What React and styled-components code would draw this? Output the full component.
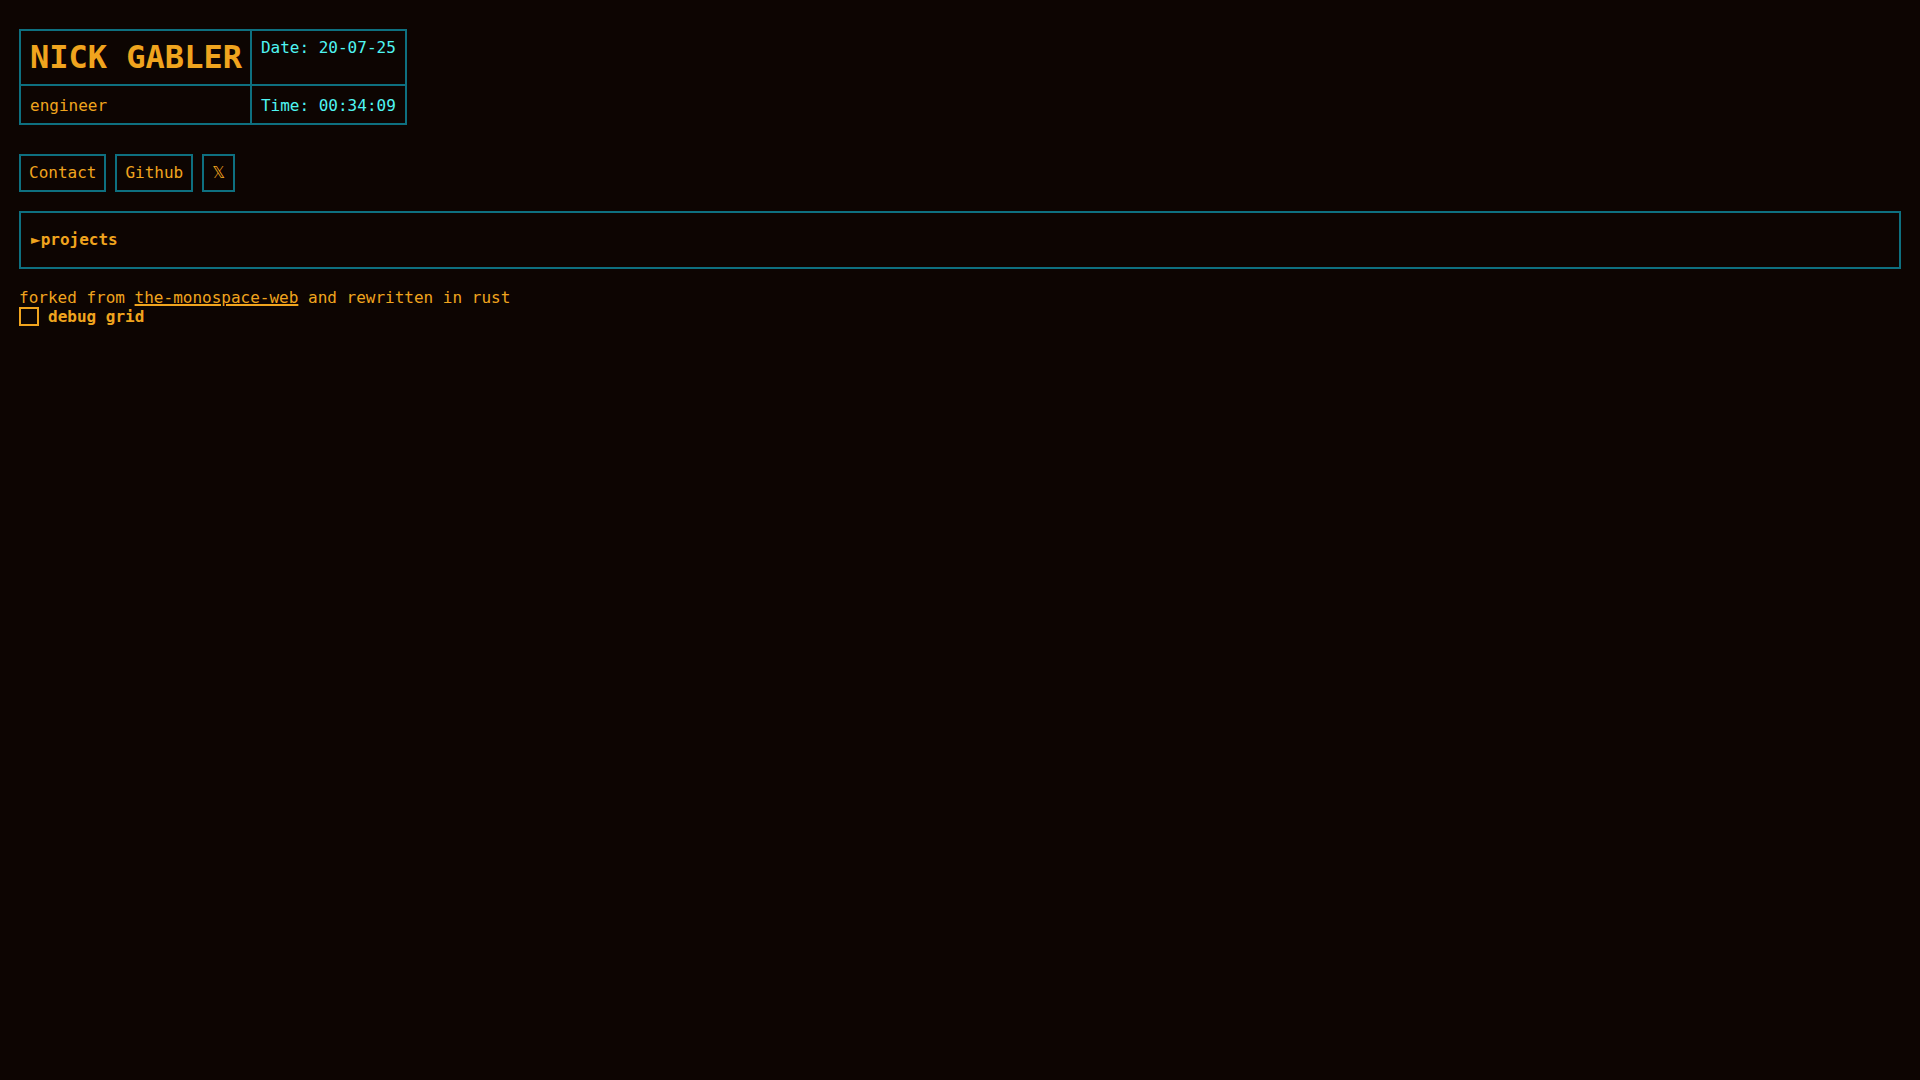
import React, { useState } from "react";
import styled, { createGlobalStyle, css } from "styled-components";

const amber = "#f0a41e";
const teal = "#0e7080";
const cyan = "#4ff5f2";
const ink = "#0d0502";

const GlobalStyle = createGlobalStyle`
  *, *::before, *::after { box-sizing: border-box; }
  body {
    margin: 0;
    background: ${ink};
    color: ${amber};
    font: 400 16px/19px "DejaVu Sans Mono", "DejaVu Sans", monospace;
  }
`;

const Page = styled.div`
  min-height: 100vh;
  padding: 29px 19px;
  ${(p) =>
    p.$grid &&
    css`
      background-image: repeating-linear-gradient(${teal} 0 1px, transparent 1px 19px),
        repeating-linear-gradient(90deg, ${teal} 0 1px, transparent 1px 10px);
    `}
`;

const Masthead = styled.table`
  border-collapse: collapse;
  margin-bottom: 29px;
`;

const Cell = styled.td`
  border: 2px solid ${teal};
  padding: ${(p) => (p.$top ? "7px" : "10px")} ${(p) => (p.$info ? "9px" : "8px")} 8px 9px;
  vertical-align: top;
  text-align: left;
  color: ${(p) => (p.$info ? cyan : amber)};
`;

const Title = styled.h1`
  margin: 0;
  font-size: 32px;
  line-height: 38px;
  font-weight: 700;
`;

const Links = styled.nav`
  display: flex;
  gap: 9px;
  margin-bottom: 19px;
`;

const BoxLink = styled.a`
  padding: 7px 8px 8px;
  border: 2px solid ${teal};
  color: inherit;
  text-decoration: none;
  height: 38px;
`;

const Projects = styled.details`
  border: 2px solid ${teal};
  padding: 17px 10px 18px;
  margin-bottom: 19px;
`;

const Summary = styled.summary`
  display: block;
  font-weight: 700;
  cursor: pointer;

  &::before { content: "►"; }
  details[open] > &::before { content: "▼"; }
`;

const Footer = styled.footer`
  line-height: 19px;
`;

const TextLink = styled.a`
  color: inherit;
  text-decoration: underline;
  text-decoration-thickness: 2px;
`;

const Toggle = styled.label`
  display: flex;
  width: fit-content;
  gap: 9px;
  font-weight: 700;
  cursor: pointer;
`;

const Tick = styled.input`
  appearance: none;
  width: 20px;
  height: 19px;
  margin: 0;
  border: 2px solid ${amber};

  &:checked { background: ${amber}; }
`;

export default function App() {
  const [grid, setGrid] = useState(false);
  return (
    <>
      <GlobalStyle />
      <Page $grid={grid}>
        <Masthead>
          <tbody>
            <tr>
              <Cell $top><Title>NICK GABLER</Title></Cell>
              <Cell $top $info>Date: 20-07-25</Cell>
            </tr>
            <tr>
              <Cell>engineer</Cell>
              <Cell $info>Time: 00:34:09</Cell>
            </tr>
          </tbody>
        </Masthead>
        <Links>
          <BoxLink href="#contact">Contact</BoxLink>
          <BoxLink href="#github">Github</BoxLink>
          <BoxLink href="#x">𝕏</BoxLink>
        </Links>
        <Projects>
          <Summary>projects</Summary>
        </Projects>
        <Footer>
          forked from <TextLink href="#the-monospace-web">the-monospace-web</TextLink> and rewritten in rust
          <Toggle>
            <Tick type="checkbox" checked={grid} onChange={(e) => setGrid(e.target.checked)} />
            debug grid
          </Toggle>
        </Footer>
      </Page>
    </>
  );
}
